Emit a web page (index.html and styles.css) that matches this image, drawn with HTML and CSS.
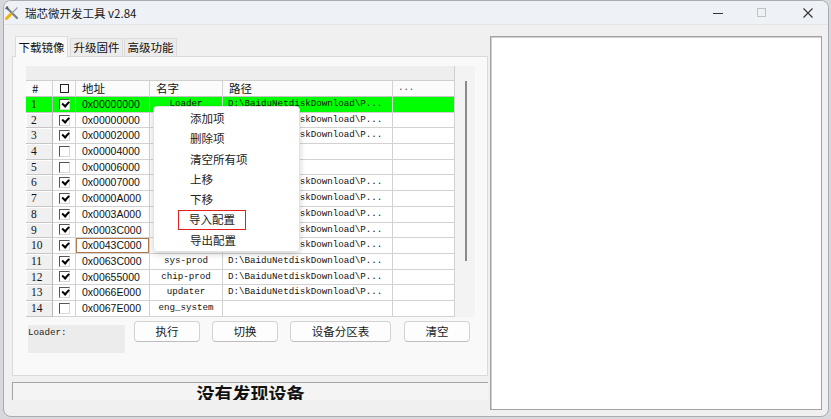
FILE: index.html
```html
<!DOCTYPE html>
<html lang="zh-CN">
<head>
    <meta charset="UTF-8">
    <title>瑞芯微开发工具 v2.84</title>
    <link rel="stylesheet" href="styles.css">
</head>
<body>
    <div class="window">
        <div class="titlebar">
            <svg class="app-icon" width="14" height="14" viewBox="0 0 14 14">
                <path d="M2 2 L12 12" stroke="#7b7f86" stroke-width="2.2" stroke-linecap="round"/>
                <path d="M0.5 3 L3 0.5 M1 1 L3.5 3.5" stroke="#5d6168" stroke-width="1.4"/>
                <path d="M6.5 7.5 L12.5 1.5" stroke="#9aa0a8" stroke-width="1.2"/>
                <path d="M1.5 12.5 L5.5 8.5" stroke="#f0b400" stroke-width="3" stroke-linecap="round"/>
            </svg>
            <span class="title">瑞芯微开发工具 v2.84</span>
            <div class="controls">
                <span class="ctl"><svg width="10" height="10"><path d="M0 5.5 H10" stroke="#333" stroke-width="1"/></svg></span>
                <span class="ctl"><svg width="10" height="10"><rect x="0.5" y="0.5" width="8" height="8" fill="none" stroke="#c2c2c2"/></svg></span>
                <span class="ctl close"><svg width="10" height="10"><path d="M0.5 0.5 L9.5 9.5 M9.5 0.5 L0.5 9.5" stroke="#333" stroke-width="1.1"/></svg></span>
            </div>
        </div>

        <div class="client">
            <div class="left">
                <div class="tabs">
                    <div class="tab active">下载镜像</div>
                    <div class="tab">升级固件</div>
                    <div class="tab">高级功能</div>
                </div>

                <div class="tab-panel">
                    <div class="list">
                        <div class="grid">
                            <div class="band"></div>
                            <div class="row head">
                                <span class="c">#</span>
                                <span class="c chk"><i class="hbox"></i></span>
                                <span class="c">地址</span>
                                <span class="c">名字</span>
                                <span class="c">路径</span>
                                <span class="c dots">...</span>
                            </div>
                            <div class="row sel"><span class="c num">1</span><span class="c chk"><i class="cb on"></i></span><span class="c addr">0x00000000</span><span class="c name">Loader</span><span class="c path">D:\BaiduNetdiskDownload\P...</span><span class="c"></span></div>
                            <div class="row"><span class="c num">2</span><span class="c chk"><i class="cb on"></i></span><span class="c addr">0x00000000</span><span class="c name">Parameter</span><span class="c path">D:\BaiduNetdiskDownload\P...</span><span class="c"></span></div>
                            <div class="row"><span class="c num">3</span><span class="c chk"><i class="cb on"></i></span><span class="c addr">0x00002000</span><span class="c name">uboot</span><span class="c path">D:\BaiduNetdiskDownload\P...</span><span class="c"></span></div>
                            <div class="row"><span class="c num">4</span><span class="c chk"><i class="cb"></i></span><span class="c addr">0x00004000</span><span class="c name">misc</span><span class="c path"></span><span class="c"></span></div>
                            <div class="row"><span class="c num">5</span><span class="c chk"><i class="cb"></i></span><span class="c addr">0x00006000</span><span class="c name">dtbo</span><span class="c path"></span><span class="c"></span></div>
                            <div class="row"><span class="c num">6</span><span class="c chk"><i class="cb on"></i></span><span class="c addr">0x00007000</span><span class="c name">vbmeta</span><span class="c path">D:\BaiduNetdiskDownload\P...</span><span class="c"></span></div>
                            <div class="row"><span class="c num">7</span><span class="c chk"><i class="cb on"></i></span><span class="c addr">0x0000A000</span><span class="c name">boot</span><span class="c path">D:\BaiduNetdiskDownload\P...</span><span class="c"></span></div>
                            <div class="row"><span class="c num">8</span><span class="c chk"><i class="cb on"></i></span><span class="c addr">0x0003A000</span><span class="c name">recovery</span><span class="c path">D:\BaiduNetdiskDownload\P...</span><span class="c"></span></div>
                            <div class="row"><span class="c num">9</span><span class="c chk"><i class="cb on"></i></span><span class="c addr">0x0003C000</span><span class="c name">backup</span><span class="c path">D:\BaiduNetdiskDownload\P...</span><span class="c"></span></div>
                            <div class="row"><span class="c num">10</span><span class="c chk"><i class="cb on"></i></span><span class="c addr focus">0x0043C000</span><span class="c name">super</span><span class="c path">D:\BaiduNetdiskDownload\P...</span><span class="c"></span></div>
                            <div class="row"><span class="c num">11</span><span class="c chk"><i class="cb on"></i></span><span class="c addr">0x0063C000</span><span class="c name">sys-prod</span><span class="c path">D:\BaiduNetdiskDownload\P...</span><span class="c"></span></div>
                            <div class="row"><span class="c num">12</span><span class="c chk"><i class="cb on"></i></span><span class="c addr">0x00655000</span><span class="c name">chip-prod</span><span class="c path">D:\BaiduNetdiskDownload\P...</span><span class="c"></span></div>
                            <div class="row"><span class="c num">13</span><span class="c chk"><i class="cb on"></i></span><span class="c addr">0x0066E000</span><span class="c name">updater</span><span class="c path">D:\BaiduNetdiskDownload\P...</span><span class="c"></span></div>
                            <div class="row"><span class="c num">14</span><span class="c chk"><i class="cb"></i></span><span class="c addr">0x0067E000</span><span class="c name">eng_system</span><span class="c path"></span><span class="c"></span></div>
                        </div>
                        <div class="scrollbar"><div class="thumb"></div></div>

                        <div class="menu">
                            <div class="item">添加项</div>
                            <div class="item">删除项</div>
                            <div class="item">清空所有项</div>
                            <div class="item">上移</div>
                            <div class="item">下移</div>
                            <div class="item"><span class="hl">导入配置</span></div>
                            <div class="item">导出配置</div>
                        </div>
                    </div>

                    <div class="actions">
                        <div class="loader-box">Loader:</div>
                        <button class="btn">执行</button>
                        <button class="btn">切换</button>
                        <button class="btn wide">设备分区表</button>
                        <button class="btn">清空</button>
                    </div>
                </div>

                <div class="status"><span>没有发现设备</span></div>
            </div>

            <div class="log"></div>
        </div>
    </div>
</body>
</html>
```

FILE: styles.css
```css
body {
    margin: 0;
    background-color: #d6d8db;
    font-family: "Noto Sans CJK SC", "Noto Sans", sans-serif;
    font-size: 11.5px;
    color: #111;
}
.window {
    margin-left: 3px;
    width: 826px;
    height: 417px;
    box-sizing: border-box;
    border: 1px solid #a9acb0;
    border-radius: 8px;
    overflow: hidden;
    background-color: #f0f0f0;
    display: flex;
    flex-direction: column;
}
.titlebar {
    height: 23px;
    flex-shrink: 0;
    display: flex;
    align-items: center;
    background-color: #eef1f6;
    border-bottom: 1px solid #e2e4e8;
}
.app-icon {
    margin-left: 1px;
    margin-right: 6px;
}
.title {
    font-size: 11.5px;
    color: #1a1a1a;
}
.controls {
    margin-left: auto;
    display: flex;
    height: 100%;
}
.ctl {
    width: 44px;
    display: flex;
    align-items: center;
    justify-content: center;
}
.ctl.close {
    padding-left: 4px;
    width: 40px;
}
.client {
    flex: 1;
    display: flex;
    gap: 2px;
    padding: 11px 6px 0 8px;
}
.left {
    width: 476px;
    display: flex;
    flex-direction: column;
}
.tabs {
    display: flex;
    align-items: flex-end;
    gap: 1px;
    padding-left: 3px;
    height: 20px;
}
.tab {
    width: 53px;
    height: 18px;
    box-sizing: border-box;
    text-align: center;
    line-height: 17px;
    background-color: #ececec;
    border: 1px solid #dcdcdc;
    border-bottom: none;
}
.tab.active {
    height: 21px;
    line-height: 20px;
    margin-bottom: -1px;
    margin-right: 1px;
    background-color: #f9f9f9;
    position: relative;
    z-index: 1;
}
.tab-panel {
    height: 320px;
    box-sizing: border-box;
    border: 1px solid #dadada;
    background-color: #f9f9f9;
    padding: 9px 0 0 13px;
}
.list {
    position: relative;
    display: flex;
}
.grid {
    width: 429px;
    background-color: #fff;
}
.band {
    height: 15px;
    box-sizing: border-box;
    background-color: #eeeeee;
    border-bottom: 1px solid #cfcfcf;
    border-right: 1px solid #cfcfcf;
}
.row {
    display: grid;
    grid-template-columns: 27px 23px 74px 73px 170px 62px;
    height: 15.7px;
}
.row .c {
    box-sizing: border-box;
    border-right: 1px solid #d2d2d2;
    border-bottom: 1px solid #d2d2d2;
    line-height: 14px;
    white-space: nowrap;
    overflow: hidden;
}
.row.head {
    height: 16px;
    background-color: #fbfbfb;
}
.row.head .c {
    padding-left: 6px;
    line-height: 15px;
    border-bottom-color: #c4c4c4;
}
.row.head .dots {
    padding-left: 5px;
    font-family: "Liberation Mono", monospace;
    font-size: 9px;
    color: #444;
}
.hbox {
    display: block;
    width: 9px;
    height: 9px;
    box-sizing: border-box;
    border: 1px solid #222;
    margin: 3px 0 0 0;
}
.row .chk {
    display: flex;
    align-items: center;
    justify-content: center;
    padding-left: 0;
}
.row.head .chk {
    padding-left: 0;
}
.row.head .chk .hbox {
    margin: 0;
}
.num {
    padding-left: 5px;
    font-family: "Liberation Serif", serif;
    font-size: 11.5px;
    background-color: #f0f0f0;
    box-shadow: inset 1px 1px 0 #fff;
    border-right-color: #b9b9b9 !important;
    border-bottom-color: #c6c6c6 !important;
}
.cb {
    position: relative;
    width: 11px;
    height: 11px;
    box-sizing: border-box;
    background-color: #fff;
    border-top: 1px solid #555;
    border-left: 1px solid #555;
    border-right: 1px solid #d8d8d8;
    border-bottom: 1px solid #d8d8d8;
}
.cb.on::after {
    content: "";
    position: absolute;
    left: 2px;
    top: 1px;
    width: 5px;
    height: 2.5px;
    border-left: 2px solid #000;
    border-bottom: 2px solid #000;
    transform: rotate(-48deg);
}
.addr {
    padding-left: 6px;
    font-family: "Liberation Sans", sans-serif;
    font-size: 10.5px;
}
.addr.focus {
    box-shadow: inset 0 0 0 1px #b07a4e;
}
.name {
    text-align: center;
    font-family: "Liberation Mono", monospace;
    font-size: 9.2px;
}
.path {
    padding-left: 5px;
    font-family: "Liberation Mono", monospace;
    font-size: 9.2px;
}
.row.sel .c {
    background-color: #00ff00;
    box-shadow: none;
}
.scrollbar {
    width: 20px;
    background-color: #f3f3f3;
}
.thumb {
    width: 2px;
    height: 180px;
    margin: 15px 0 0 10px;
    background-color: #8a8a8a;
}
.menu {
    position: absolute;
    left: 127px;
    top: 40px;
    width: 147px;
    height: 146px;
    box-sizing: border-box;
    padding-top: 1px;
    background-color: #fff;
    border: 1px solid #e3e3e3;
    border-radius: 4px;
    box-shadow: 0 2px 6px rgba(0, 0, 0, 0.18);
}
.item {
    height: 20.3px;
    line-height: 20px;
    padding-left: 36px;
    color: #222;
}
.hl {
    display: inline-block;
    height: 20px;
    box-sizing: border-box;
    line-height: 17px;
    margin-left: -12px;
    padding: 0 10px;
    border: 1.5px solid #e32020;
}
.actions {
    display: flex;
    align-items: flex-start;
    margin-top: 4px;
    padding-left: 2px;
}
.loader-box {
    width: 97px;
    height: 28px;
    margin-top: 4px;
    margin-right: 9px;
    box-sizing: border-box;
    padding-top: 2px;
    background-color: #ececec;
    font-family: "Liberation Mono", monospace;
    font-size: 9.2px;
    color: #222;
}
.btn {
    width: 66px;
    height: 21px;
    margin-right: 12px;
    padding: 0;
    font-family: "Noto Sans CJK SC", sans-serif;
    font-size: 11.5px;
    color: #1a1a1a;
    background-color: #fdfdfd;
    border: 1px solid #d3d3d3;
    border-bottom-color: #bdbdbd;
    border-radius: 4px;
}
.btn.wide {
    width: 101px;
    margin-right: 13px;
}
.status {
    margin-top: 6px;
    height: 18px;
    overflow: hidden;
    box-sizing: border-box;
    border-top: 1px solid #a5a5a5;
    border-left: 1px solid #a5a5a5;
    background-color: #f4f4f4;
    text-align: center;
}
.status span {
    display: block;
    font-size: 18px;
    font-weight: bold;
    line-height: 21px;
    color: #111;
}
.log {
    width: 332px;
    height: 374px;
    box-sizing: border-box;
    background-color: #fff;
    border: 1px solid #a2a2a2;
    box-shadow: inset 1px 1px 0 #d0d0d0;
}
```
